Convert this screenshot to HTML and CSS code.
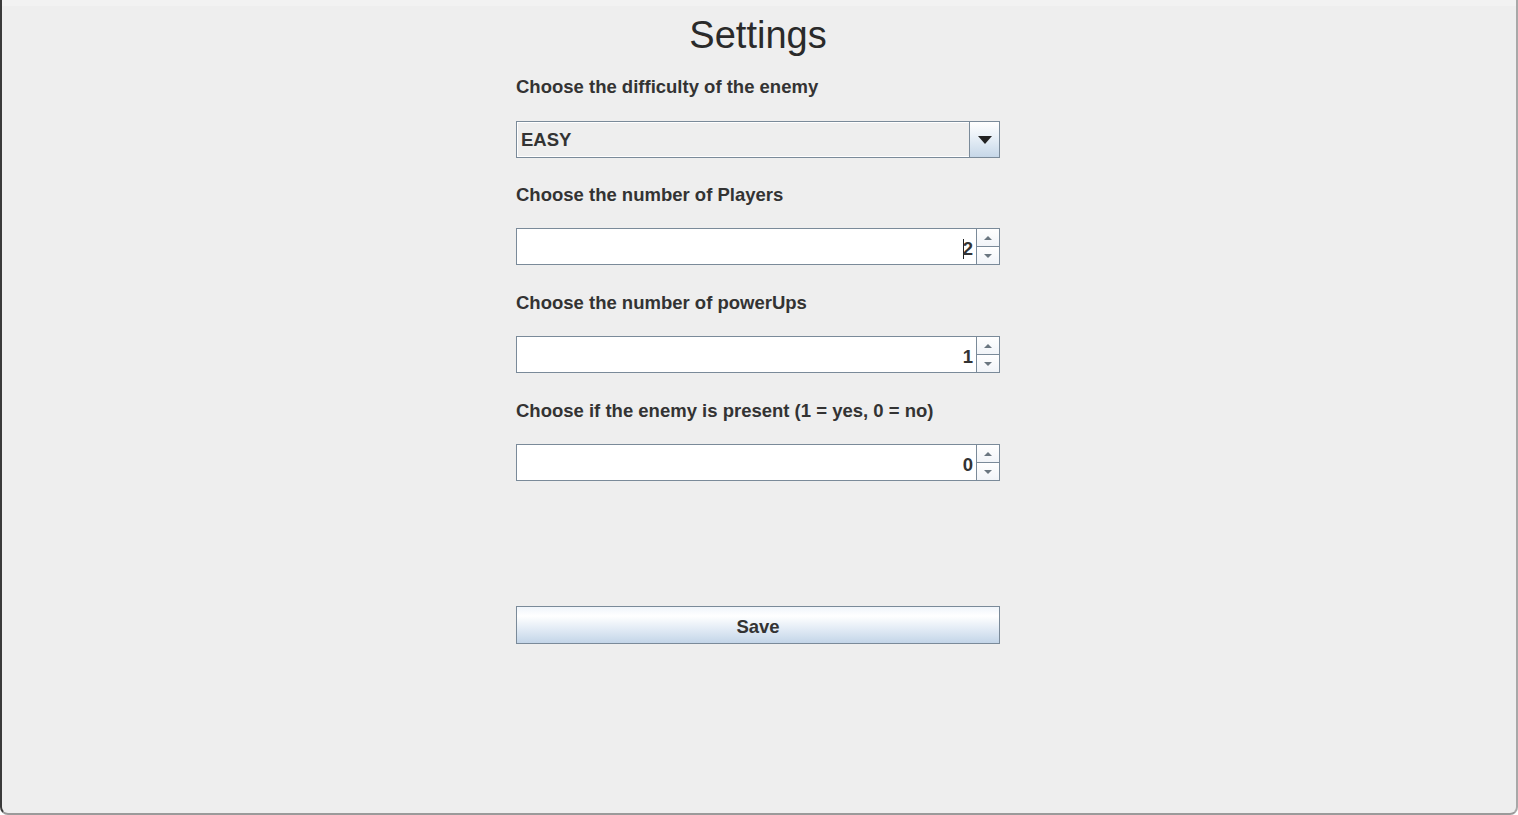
FILE: index.html
```html
<!DOCTYPE html>
<html>
<head>
<meta charset="utf-8">
<link rel="stylesheet" href="styles.css">
<title>Settings</title>
</head>
<body>
<div class="window">
  <div class="titlestrip"></div>
  <div class="content">
    <h1 class="title">Settings</h1>
    <div class="form">
      <div class="label">Choose the difficulty of the enemy</div>
      <div class="combo">
        <div class="combo-value">EASY</div>
        <div class="combo-btn"><span class="combo-arrow"></span></div>
      </div>

      <div class="label label-spin">Choose the number of Players</div>
      <div class="spinner">
        <div class="spin-field"><span class="caret"></span>2</div>
        <div class="spin-btns">
          <div class="spin-btn"><span class="tri-up"></span></div>
          <div class="spin-btn"><span class="tri-down"></span></div>
        </div>
      </div>

      <div class="label label-spin">Choose the number of powerUps</div>
      <div class="spinner">
        <div class="spin-field">1</div>
        <div class="spin-btns">
          <div class="spin-btn"><span class="tri-up"></span></div>
          <div class="spin-btn"><span class="tri-down"></span></div>
        </div>
      </div>

      <div class="label label-spin">Choose if the enemy is present (1 = yes, 0 = no)</div>
      <div class="spinner">
        <div class="spin-field">0</div>
        <div class="spin-btns">
          <div class="spin-btn"><span class="tri-up"></span></div>
          <div class="spin-btn"><span class="tri-down"></span></div>
        </div>
      </div>

      <button class="save">Save</button>
    </div>
  </div>
</div>
</body>
</html>
```

FILE: styles.css
```css
html, body {
  margin: 0;
  padding: 0;
  width: 1518px;
  height: 815px;
  overflow: hidden;
  background: #ffffff;
  font-family: "Liberation Sans", Arial, sans-serif;
}

.window {
  width: 1518px;
  height: 815px;
  box-sizing: border-box;
  background: #eeeeee;
  border-left: 2px solid #3a3a3a;
  border-right: 2px solid #a8a8a8;
  border-bottom: 2px solid #9a9a9a;
  border-radius: 0 0 8px 8px;
  display: flex;
  flex-direction: column;
}

.titlestrip {
  height: 6px;
  background: #f2f2f2;
  flex: none;
}

.content {
  display: flex;
  flex-direction: column;
  align-items: center;
  padding-right: 2px;
}

.title {
  margin: 7px 0 0 0;
  font-weight: normal;
  font-size: 38px;
  line-height: 44px;
  color: #2a2a2a;
}

.form {
  width: 484px;
  display: flex;
  flex-direction: column;
  margin-top: 20px;
}

.label {
  font-weight: bold;
  font-size: 18.5px;
  line-height: 20px;
  color: #333333;
  height: 20px;
  margin-bottom: 24px;
  white-space: nowrap;
}

.label-spin {
  padding-top: 1px;
  margin-bottom: 23px;
}

.combo {
  height: 37px;
  box-sizing: border-box;
  border: 1px solid #7a8a99;
  display: flex;
  margin-bottom: 26px;
  background: #eeeeee;
}

.combo-value {
  flex: 1;
  border: 1px solid #ffffff;
  border-right: none;
  font-weight: bold;
  font-size: 18.5px;
  color: #333333;
  display: flex;
  align-items: center;
  padding-left: 3px;
}

.combo-btn {
  width: 29px;
  border-left: 1px solid #7a8a99;
  background: linear-gradient(#ffffff, #eaf1f8 40%, #c6d7e8);
  display: flex;
  align-items: center;
  justify-content: center;
}

.combo-arrow {
  width: 0;
  height: 0;
  border-left: 7px solid transparent;
  border-right: 7px solid transparent;
  border-top: 8px solid #222222;
  margin-top: 1px;
}

.spinner {
  height: 37px;
  display: flex;
  margin-bottom: 27px;
}

.spin-field {
  flex: 1;
  box-sizing: border-box;
  border: 1px solid #7a8a99;
  background: #ffffff;
  font-weight: bold;
  font-size: 18.5px;
  color: #333333;
  display: flex;
  align-items: center;
  justify-content: flex-end;
  padding-right: 3px;
  padding-top: 4px;
}

.caret {
  width: 1px;
  height: 20px;
  background: #222222;
  margin-right: -1px;
}

.spin-btns {
  width: 23px;
  display: flex;
  flex-direction: column;
}

.spin-btn {
  flex: 1;
  box-sizing: border-box;
  border: 1px solid #7a8a99;
  border-left: none;
  background: linear-gradient(#ffffff, #f1f4f8);
  display: flex;
  align-items: center;
  justify-content: center;
}

.spin-btn + .spin-btn {
  border-top: none;
}

.tri-up {
  width: 0;
  height: 0;
  border-left: 4px solid transparent;
  border-right: 4px solid transparent;
  border-bottom: 4px solid #6a7680;
}

.tri-down {
  width: 0;
  height: 0;
  border-left: 4px solid transparent;
  border-right: 4px solid transparent;
  border-top: 4px solid #6a7680;
}

.save {
  margin-top: 98px;
  height: 38px;
  box-sizing: border-box;
  border: 1px solid #7a8a99;
  border-radius: 0;
  background: linear-gradient(#f0f5fb, #ffffff 25%, #dfe9f4 65%, #c3d5e8);
  font-family: "Liberation Sans", Arial, sans-serif;
  font-weight: bold;
  font-size: 18.5px;
  color: #333333;
  padding: 4px 0 0 0;
}
```
